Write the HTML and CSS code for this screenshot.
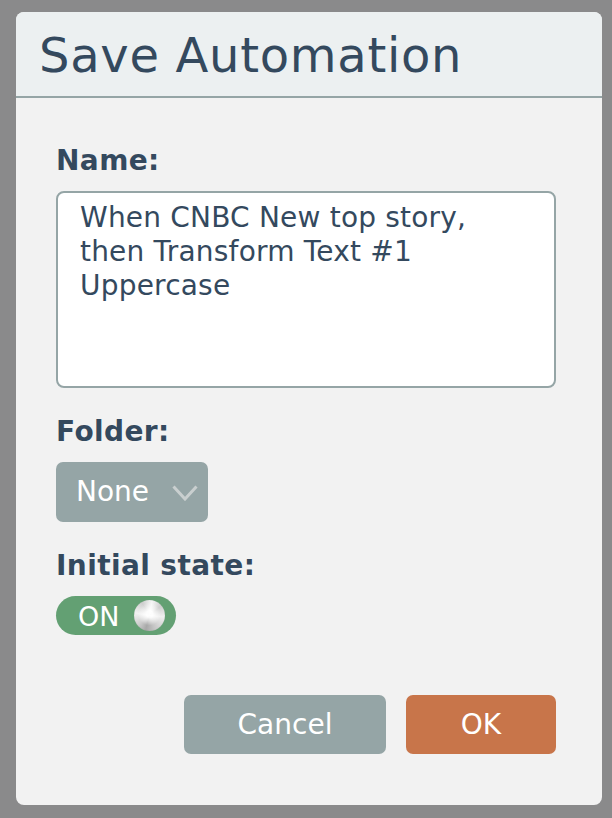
FILE: index.html
```html
<!DOCTYPE html>
<html lang="en">
<head>
<meta charset="utf-8">
<title>Save Automation</title>
<link rel="stylesheet" href="styles.css">
</head>
<body>
<div class="dialog">
  <div class="dialog-header">
    <h1 class="dialog-title">Save Automation</h1>
  </div>
  <div class="dialog-body">
    <label class="field-label" for="name">Name:</label>
    <textarea id="name" class="name-input">When CNBC New top story,
then Transform Text #1
Uppercase</textarea>

    <div class="field-label spaced">Folder:</div>
    <div class="select">
      <span class="select-value">None</span>
      <svg class="chevron" width="26" height="16" viewBox="0 0 26 16"><polyline points="1.5,1.5 13,14 24.5,1.5" fill="none" stroke="#c9cfcf" stroke-width="3"/></svg>
    </div>

    <div class="field-label spaced">Initial state:</div>
    <div class="toggle">
      <span class="toggle-text">ON</span>
      <span class="knob"></span>
    </div>

    <div class="actions">
      <button class="btn btn-cancel">Cancel</button>
      <button class="btn btn-ok">OK</button>
    </div>
  </div>
</div>
</body>
</html>
```

FILE: styles.css
```css
html, body {
  margin: 0;
  padding: 0;
}
body {
  background: #8a8a8b;
  font-family: "DejaVu Sans", Verdana, sans-serif;
  color: #34495e;
  padding: 12px 0 0 16px;
  height: 818px;
  box-sizing: border-box;
}
.dialog {
  width: 586px;
  border-radius: 8px;
  overflow: hidden;
  background: #f2f2f2;
}
.dialog-header {
  background: #ecf0f1;
  border-bottom: 2px solid #95a5a6;
  padding: 15px 22px 13px 23px;
}
.dialog-title {
  margin: 0;
  font-size: 48px;
  line-height: 56px;
  font-weight: normal;
  letter-spacing: 0.7px;
  color: #34495e;
}
.dialog-body {
  padding: 46px 46px 51px 40px;
  display: flex;
  flex-direction: column;
  align-items: flex-start;
}
.field-label {
  font-size: 28px;
  font-weight: bold;
  line-height: 34px;
  letter-spacing: 0.4px;
  margin-bottom: 13px;
  color: #34495e;
}
.field-label.spaced {
  margin-top: 27px;
}
.name-input {
  box-sizing: border-box;
  width: 500px;
  height: 197px;
  margin: 0;
  border: 2px solid #95a5a6;
  border-radius: 8px;
  background: #fff;
  padding: 8px 10px 0 22px;
  font-family: "DejaVu Sans", Verdana, sans-serif;
  font-size: 28px;
  line-height: 34px;
  letter-spacing: 0.2px;
  color: #34495e;
  resize: none;
  overflow: hidden;
  outline: none;
  white-space: pre-wrap;
}
.select {
  box-sizing: border-box;
  width: 152px;
  height: 60px;
  background: #95a5a6;
  border-radius: 7px;
  display: flex;
  align-items: center;
  justify-content: space-between;
  padding: 0 10px 0 20px;
}
.select-value {
  color: #fff;
  font-size: 28px;
  line-height: 34px;
}
.chevron {
  display: block;
  margin-top: 1px;
}
.toggle {
  box-sizing: border-box;
  width: 120px;
  height: 39px;
  border-radius: 20px;
  background: #63a073;
  display: flex;
  align-items: center;
  padding: 0 8px 0 22px;
  gap: 15px;
}
.toggle-text {
  color: #fff;
  font-size: 27px;
  line-height: 30px;
  margin-top: 3px;
}
.knob {
  width: 31px;
  height: 31px;
  border-radius: 50%;
  background:
    radial-gradient(circle at 50% 45%, rgba(255,255,255,0.95) 0 14%, rgba(255,255,255,0) 50%),
    conic-gradient(from 10deg, #f6f6f6 0deg, #cfcfcf 40deg, #f0f0f0 85deg, #c4c4c4 150deg, #a8a8a8 185deg, #cdcdcd 220deg, #f2f2f2 270deg, #cfcfcf 320deg, #f6f6f6 360deg);
  box-shadow: inset 0 0 1px rgba(0,0,0,0.15);
}
.actions {
  align-self: stretch;
  display: flex;
  justify-content: flex-end;
  gap: 20px;
  margin-top: 60px;
}
.btn {
  height: 59px;
  border: none;
  border-radius: 7px;
  color: #fff;
  font-family: "DejaVu Sans", Verdana, sans-serif;
  font-size: 28px;
  line-height: 34px;
  padding: 0;
  cursor: pointer;
}
.btn-cancel {
  width: 202px;
  background: #95a5a6;
}
.btn-ok {
  width: 150px;
  background: #c8754a;
}
```
